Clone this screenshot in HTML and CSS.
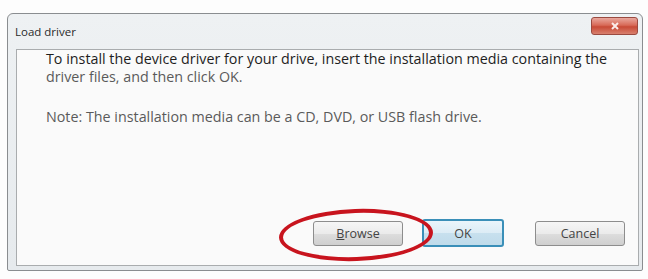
FILE: index.html
```html
<!DOCTYPE html>
<html lang="en">
<head>
   <meta charset="UTF-8">
   <title>Load driver</title>
   <link rel="stylesheet" href="styles.css">
</head>
<body>
   <div class="window">
       <div class="titlebar">
           <span class="title">Load driver</span>
           <button class="close-btn">
               <svg width="12" height="10" viewBox="0 0 12 10">
                   <path d="M3 2 L9 8 M9 2 L3 8" stroke="#fbecea" stroke-width="2" fill="none"/>
               </svg>
           </button>
       </div>
       <div class="panel">
           <div class="message">
               <p class="main-text"><span class="first-line">To install the device driver for your drive, insert the installation media containing the</span><br>driver files, and then click OK.</p>
               <p class="note">Note: The installation media can be a CD, DVD, or USB flash drive.</p>
           </div>
           <div class="buttons">
               <div class="browse-wrap">
                   <button class="btn"><u>B</u>rowse</button>
                   <div class="circle"></div>
               </div>
               <button class="btn btn-default">OK</button>
               <button class="btn">Cancel</button>
           </div>
       </div>
   </div>
</body>
</html>
```

FILE: styles.css
```css
body {
    margin: 0;
    background: #fdfdfd;
    font-family: "Open Sans", "Noto Sans", sans-serif;
    width: 648px;
    height: 279px;
    overflow: hidden;
}
.window {
    margin: 13px 5px 0 7px;
    height: 258px;
    border: 1px solid #8a8d90;
    border-radius: 6px 6px 2px 2px;
    background: linear-gradient(180deg, #eef1f3 0%, #e6eaed 100%);
    display: flex;
    flex-direction: column;
    box-sizing: border-box;
}
.titlebar {
    height: 32px;
    display: flex;
    justify-content: space-between;
    align-items: flex-start;
    padding: 3px 4px 0 7px;
}
.title {
    font-size: 11.5px;
    color: #2a2a2a;
    margin-top: 7px;
}
.close-btn {
    width: 47px;
    height: 18px;
    border: 1px solid #9a4a40;
    border-radius: 3px;
    background: linear-gradient(180deg, #e9a89e 0%, #d86a58 45%, #c84a36 55%, #d8806e 100%);
    display: flex;
    align-items: center;
    justify-content: center;
    padding: 0;
}
.panel {
    flex: 1;
    margin: 0 3px 4px 8px;
    border: 1px solid #a9acae;
    background: #fafafa;
    display: flex;
    flex-direction: column;
    justify-content: space-between;
}
.message {
    padding: 0 8px 0 29px;
    font-size: 14.3px;
    color: #5a5a5a;
}
.message p {
    margin: 0;
    line-height: 18px;
}
.first-line {
    color: #1e1e1e;
}
.note {
    margin-top: 22px !important;
}
.buttons {
    display: flex;
    justify-content: flex-end;
    align-items: center;
    padding: 0 13px 18px 0;
}
.browse-wrap {
    position: relative;
    margin-right: 19px;
}
.btn {
    font-family: "Open Sans", "Noto Sans", sans-serif;
    font-size: 12.5px;
    color: #444;
    width: 90px;
    height: 25px;
    border: 1px solid #8d8d8d;
    border-radius: 3px;
    background: linear-gradient(180deg, #f6f6f6 0%, #ebebeb 50%, #dddddd 52%, #cfcfcf 100%);
    padding: 0;
}
.btn-default {
    width: 82px;
    height: 28px;
    border: 2px solid #3a8fb8;
    background: linear-gradient(180deg, #eaf5fb 0%, #dcecf5 50%, #c7e0ee 52%, #bfdbea 100%);
    margin-right: 31px;
}
.circle {
    position: absolute;
    left: -34px;
    top: -12px;
    width: 146px;
    height: 44px;
    border: 4px solid #c8141e;
    border-radius: 50%;
    transform: rotate(-2deg);
}
```
